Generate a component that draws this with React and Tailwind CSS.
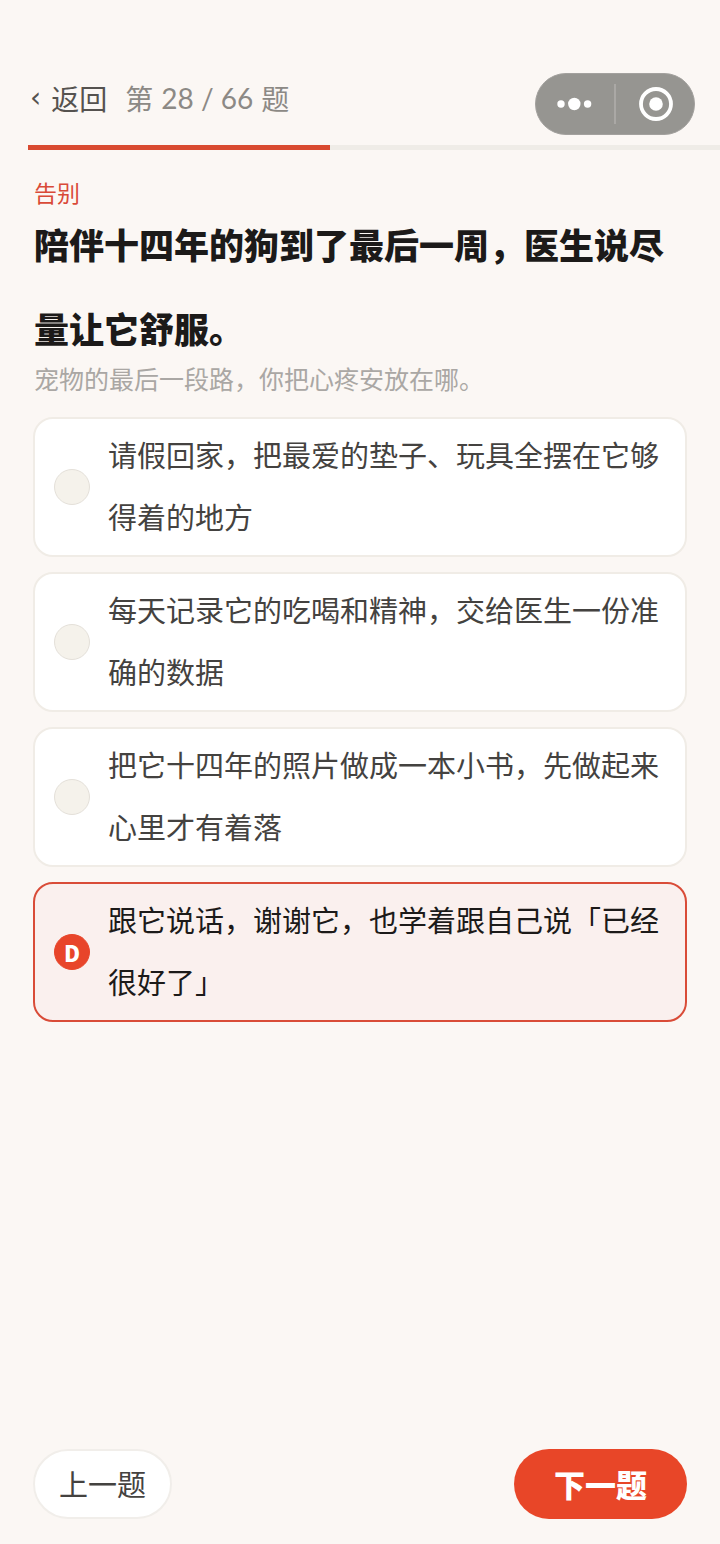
import React, { useState } from "react";

const TOTAL = 66;
const CURRENT = 28;

const options = [
  { id: "A", text: "请假回家，把最爱的垫子、玩具全摆在它够得着的地方" },
  { id: "B", text: "每天记录它的吃喝和精神，交给医生一份准确的数据" },
  { id: "C", text: "把它十四年的照片做成一本小书，先做起来心里才有着落" },
  { id: "D", text: "跟它说话，谢谢它，也学着跟自己说「已经很好了」" },
];

const Capsule = () => (
  <div className="flex h-[62px] w-40 items-center rounded-full border border-[#a3a19e] bg-[#969591]">
    <button type="button" aria-label="更多" className="flex flex-1 justify-center">
      <svg className="h-4 w-9" viewBox="0 0 36 16" fill="#fff">
        <circle cx="4" cy="8" r="3.7" />
        <circle cx="17.3" cy="8" r="6.2" />
        <circle cx="30.6" cy="8" r="3.7" />
      </svg>
    </button>
    <span className="h-10 w-0.5 bg-[#aaa8a5]" />
    <button type="button" aria-label="关闭" className="flex flex-1 justify-center">
      <svg className="h-9 w-9" viewBox="0 0 36 36">
        <circle cx="19" cy="18" r="15" fill="none" stroke="#fff" strokeWidth="3.8" />
        <circle cx="19" cy="18" r="6.8" fill="#fff" />
      </svg>
    </button>
  </div>
);

const Option = ({ option, checked, onChange }) => (
  <label
    className={`flex cursor-pointer items-center gap-[18px] rounded-[20px] border-2 px-[19px] py-1.5 ${
      checked ? "border-[#d94c38] bg-[#faf0ee] text-[#1c1a19]" : "border-[#f0ece6] bg-white text-[#444240]"
    }`}
  >
    <span className="relative h-9 w-9 shrink-0">
      <input
        type="radio"
        name="answer"
        value={option.id}
        checked={checked}
        onChange={onChange}
        className="block h-9 w-9 appearance-none rounded-full border border-[#e4e0d9] bg-[#f5f2eb] checked:border-[#e8452a] checked:bg-[#e8452a]"
      />
      {checked && (
        <span className="pointer-events-none absolute inset-0 text-center text-[22px] leading-9 font-black text-white">
          {option.id}
        </span>
      )}
    </span>
    <span className="-mt-0.5 flex-1 pb-0.5 text-[29px] leading-[62px]">{option.text}</span>
  </label>
);

const App = () => {
  const [answer, setAnswer] = useState("D");

  return (
    <div className="flex min-h-screen flex-col overflow-hidden bg-[#fbf7f4] font-['Noto_Sans_CJK_SC',sans-serif]">
      <header className="flex items-start justify-between pt-[73px] pr-[25px] pl-[30px]">
        <div className="flex items-center gap-[18px] text-[28px] leading-[50px]">
          <button type="button" className="flex gap-2.5 text-[#55524f]">
            <span className="font-['DejaVu_Sans',sans-serif]">‹</span>
            返回
          </button>
          <span className="flex gap-2 text-[#8c8985]">
            第
            <span className="font-['Lato','Noto_Sans_CJK_SC',sans-serif]">{CURRENT} / {TOTAL}</span>
            题
          </span>
        </div>
        <Capsule />
      </header>

      <div
        role="progressbar"
        aria-valuenow={CURRENT}
        aria-valuemax={TOTAL}
        className="mt-2.5 -mr-5 ml-7 h-[5px] bg-[#efece7]"
      >
        <div className="h-full bg-[#d94a30]" style={{ width: `${(CURRENT / TOTAL) * 100}%` }} />
      </div>

      <main className="flex-1 px-[33px] pt-[26px]">
        <p className="pl-px text-[23px] leading-8 text-[#d94a38]">告别</p>
        <h1 className="-my-1.5 pl-px text-[35px] leading-[84px] font-black text-[#1c1a19]">
          陪伴十四年的狗到了最后一周，医生说尽量让它舒服。
        </h1>
        <p className="pl-px text-[25px] leading-7 text-[#aaa7a4]">宠物的最后一段路，你把心疼安放在哪。</p>

        <div className="mt-[25px] flex flex-col gap-[15px]">
          {options.map((option) => (
            <Option
              key={option.id}
              option={option}
              checked={answer === option.id}
              onChange={() => setAnswer(option.id)}
            />
          ))}
        </div>
      </main>

      <footer className="flex items-center justify-between px-[33px] pt-6 pb-[25px]">
        <button
          type="button"
          className="h-[70px] rounded-full border-2 border-[#f1eeea] bg-white px-6 text-[29px] text-[#444240]"
        >
          上一题
        </button>
        <button type="button" className="h-[70px] rounded-full bg-[#e84628] px-10 text-[31px] font-black text-white">
          下一题
        </button>
      </footer>
    </div>
  );
};

export default App;
